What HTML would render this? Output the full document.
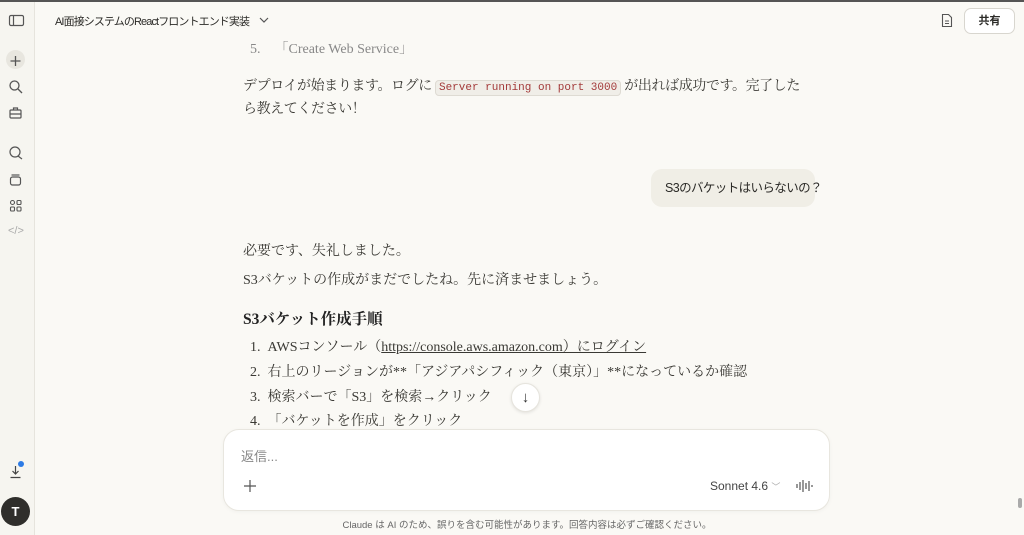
<!DOCTYPE html>
<html><head><meta charset="utf-8"><style>
*{margin:0;padding:0;box-sizing:border-box}
body{width:1024px;height:535px;overflow:hidden;background:#faf9f5;font-family:"Liberation Sans","Noto Sans CJK JP",sans-serif;color:#2b2a27;position:relative}
.top{position:absolute;left:0;top:0;width:1024px;height:2px;background:#555;z-index:5}
.side{position:absolute;left:0;top:2px;width:35px;height:533px;background:#f6f5f0;border-right:1px solid #e6e4dd;z-index:4}
.ic{position:absolute;left:8px}
.serif{font-family:"Liberation Serif","Noto Serif CJK SC",serif;font-size:14px;color:#3a3934;white-space:nowrap}
.abs{position:absolute}
</style></head><body>
<div class="top"></div>
<div class="side">
<svg class="ic" style="top:12px" width="18" height="14" viewBox="0 0 18 14" fill="none" stroke="#555" stroke-width="1.2"><rect x="1.5" y="1.5" width="14" height="10" rx="1.5"/><line x1="5.5" y1="1.5" x2="5.5" y2="11.5"/></svg>
<div class="abs" style="left:6px;top:48px;width:19px;height:19px;border-radius:50%;background:#e8e6df"></div>
<svg class="ic" style="top:51px" width="16" height="16" viewBox="0 0 16 16" stroke="#555" stroke-width="1.3"><path d="M7.5 3v10M2.5 8h10"/></svg>
<svg class="ic" style="top:77px" width="16" height="16" viewBox="0 0 16 16" fill="none" stroke="#555" stroke-width="1.3"><circle cx="6.5" cy="6.5" r="4.5"/><path d="M10 10l4 4"/></svg>
<svg class="ic" style="top:103px" width="16" height="16" viewBox="0 0 16 16" fill="none" stroke="#555" stroke-width="1.2"><rect x="2" y="5" width="11" height="8" rx="1"/><path d="M5.5 5V3h4v2M2 9h11"/></svg>
<svg class="ic" style="top:143px" width="16" height="16" viewBox="0 0 16 16" fill="none" stroke="#555" stroke-width="1.2"><circle cx="7" cy="7" r="5"/><path d="M10 11l4 3"/></svg>
<svg class="ic" style="top:170px" width="16" height="16" viewBox="0 0 16 16" fill="none" stroke="#555" stroke-width="1.2"><rect x="2.5" y="5" width="10" height="8" rx="2"/><path d="M3.5 3h8"/></svg>
<svg class="ic" style="top:196px" width="16" height="16" viewBox="0 0 16 16" fill="none" stroke="#555" stroke-width="1.1"><circle cx="4.5" cy="4.5" r="2"/><rect x="9" y="2.5" width="4" height="4" rx="1"/><rect x="2.5" y="9" width="4" height="4" rx="1"/><rect x="9" y="9" width="4" height="4" rx="1"/></svg>
<div class="abs" style="left:8px;top:223px;font-size:11px;color:#aaa">&lt;/&gt;</div>
<svg class="ic" style="top:462px" width="16" height="16" viewBox="0 0 16 16" fill="none" stroke="#444" stroke-width="1.2"><path d="M7.5 2v8M4.5 7l3 3 3-3M2.5 13.5h10"/></svg>
<div class="abs" style="left:18px;top:459px;width:6px;height:6px;border-radius:50%;background:#2d7be5"></div>
<div class="abs" style="left:1px;top:495px;width:29px;height:29px;border-radius:50%;background:#2f2e2b;color:#fff;font-weight:bold;font-size:13px;text-align:center;line-height:29px">T</div>
</div>
<div class="abs" style="left:55px;top:13px;font-size:11px;letter-spacing:-0.9px;color:#2b2a27;white-space:nowrap">AI面接システムのReactフロントエンド実装</div>
<svg class="abs" style="left:258px;top:16px" width="12" height="8" viewBox="0 0 12 8" fill="none" stroke="#555" stroke-width="1.2"><path d="M2 2l4 4 4-4"/></svg>
<svg class="abs" style="left:941px;top:13px" width="12" height="15" viewBox="0 0 12 15" fill="none" stroke="#555" stroke-width="1.1"><path d="M1.5 1.5h6l3 3v9h-9z M4 8h4M4 10.5h4"/></svg>
<div class="abs" style="left:964px;top:8px;width:51px;height:26px;border:1px solid #d8d6cf;border-radius:7px;background:#fff;font-size:11px;font-weight:bold;text-align:center;line-height:24px">共有</div>

<div class="abs serif" style="left:250px;top:38px;color:#888">5.&nbsp;&nbsp;&nbsp;&nbsp;「Create Web Service」</div>
<div class="abs serif" style="left:243px;top:76px;line-height:21px;letter-spacing:-0.4px">デプロイが始まります。ログに <span style="font-family:'Liberation Mono',monospace;font-size:11px;letter-spacing:0;color:#a33a3a;background:#f0eee8;border:1px solid #dedbd3;border-radius:4px;padding:1px 3px">Server running on port 3000</span> が出れば成功です。完了した<br>ら教えてください！</div>
<div class="abs" style="left:651px;top:169px;width:164px;height:38px;border-radius:11px;background:#f0eee6;font-size:12.5px;line-height:38px;padding-left:14px;white-space:nowrap;letter-spacing:-0.6px">S3のバケットはいらないの？</div>
<div class="abs serif" style="left:243px;top:240px">必要です、失礼しました。</div>
<div class="abs serif" style="left:243px;top:269px">S3バケットの作成がまだでしたね。先に済ませましょう。</div>
<div class="abs serif" style="left:243px;top:307px;font-size:15.5px;font-weight:bold;color:#222">S3バケット作成手順</div>
<div class="abs serif" style="left:250px;top:336px">1.&nbsp;&nbsp;AWSコンソール（<u>https://console.aws.amazon.com）にログイン</u></div>
<div class="abs serif" style="left:250px;top:361px">2.&nbsp;&nbsp;右上のリージョンが**「アジアパシフィック（東京）」**になっているか確認</div>
<div class="abs serif" style="left:250px;top:386px">3.&nbsp;&nbsp;検索バーで「S3」を検索→クリック</div>
<div class="abs serif" style="left:250px;top:410px">4.&nbsp;&nbsp;「バケットを作成」をクリック</div>
<div class="abs" style="left:511px;top:383px;width:29px;height:29px;border-radius:50%;background:#fff;border:1px solid #e6e4dd;box-shadow:0 1px 3px rgba(0,0,0,.1);text-align:center;line-height:27px;font-size:15px;color:#333">↓</div>
<div class="abs" style="left:36px;top:428px;width:988px;height:107px;background:#faf9f5"></div>
<div class="abs" style="left:223px;top:429px;width:607px;height:82px;background:#fff;border:1px solid #e8e6df;border-radius:16px;box-shadow:0 1px 4px rgba(0,0,0,.04)"></div>
<div class="abs" style="left:241px;top:446px;font-size:13px;color:#888">返信...</div>
<svg class="abs" style="left:243px;top:479px" width="14" height="14" viewBox="0 0 14 14" stroke="#555" stroke-width="1.2"><path d="M7 1v12M1 7h12"/></svg>
<div class="abs" style="left:710px;top:479px;font-size:12px;color:#444">Sonnet 4.6 <span style="color:#aaa;font-size:9px">﹀</span></div>
<svg class="abs" style="left:795px;top:478px" width="18" height="16" viewBox="0 0 18 16" stroke="#555" stroke-width="1.2"><path d="M2 6v4M5 4v8M8 2v12M11 5v6M14 3v10M17 7v2"/></svg>
<div class="abs" style="left:0;top:517px;width:1054px;text-align:center;font-size:9.5px;color:#666">Claude は AI のため、誤りを含む可能性があります。回答内容は必ずご確認ください。</div>
<div class="abs" style="left:1018px;top:498px;width:4px;height:10px;background:#aaa;border-radius:2px"></div>
</body></html>
